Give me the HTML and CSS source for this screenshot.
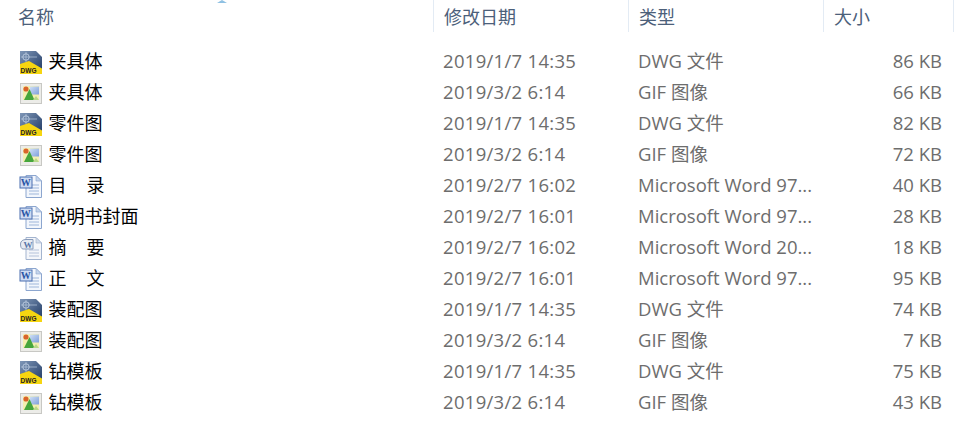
FILE: index.html

```html
<!DOCTYPE html>
<html lang="zh-CN">
<head>
  <meta charset="UTF-8" />
  <meta name="viewport" content="width=device-width, initial-scale=1" />
  <title>文件列表</title>
  <link rel="stylesheet" href="styles.css">
</head>
<body>
  <svg class="defs" width="0" height="0">
    <defs>
      <linearGradient id="dwgTop" x1="0" y1="0" x2="1" y2="1">
        <stop offset="0" stop-color="#7f97b8" />
        <stop offset="1" stop-color="#1b3560" />
      </linearGradient>
      <linearGradient id="gifSky" x1="0" y1="0" x2="1" y2="1">
        <stop offset="0" stop-color="#cfe0f5" />
        <stop offset="1" stop-color="#7f9fdc" />
      </linearGradient>
      <symbol id="dwg" viewBox="0 0 24 24">
        <path d="M1 1H17L23 7V24H1Z" fill="url(#dwgTop)" />
        <circle cx="7" cy="7" r="3.2" fill="none" stroke="#b8c8de" stroke-width="1" />
        <path d="M7 2V12M2 7H18" stroke="#b8c8de" stroke-width=".7" />
        <path d="M1 14L10 11L23 18.5V24H1Z" fill="#f6d510" />
        <text x="1.6" y="22.6" class="dwg-label">DWG</text>
      </symbol>
      <symbol id="gif" viewBox="0 0 24 24">
        <rect x="1.5" y="2.5" width="21" height="20" fill="#ecece8" stroke="#c8c8c4" />
        <rect x="4" y="5" width="16" height="14" fill="#f4efb0" />
        <rect x="11" y="5.5" width="9" height="8" fill="url(#gifSky)" />
        <path d="M5 19L10.5 8L15.5 19Z" fill="#46a63c" />
        <path d="M14 19L17 15L20 19Z" fill="#b7d88a" />
        <circle cx="7" cy="8" r="2.6" fill="#d9642a" />
      </symbol>
      <symbol id="doc" viewBox="0 0 24 24">
        <path d="M7 1.5H17L22.5 7V23.5H7Z" fill="#f2f6fc" stroke="#8ca6cf" />
        <path d="M17 1.5V7H22.5Z" fill="#c5d5ec" stroke="#8ca6cf" stroke-width=".6" />
        <path d="M10 11H20M10 14H20M10 17H20M10 20H20" stroke="#9db5da" stroke-width="1.2" />
        <rect x="1" y="3" width="12" height="11" fill="#cfdcf2" stroke="#4a6fb0" />
        <text x="1.8" y="12" class="doc-label">W</text>
      </symbol>
      <symbol id="docx" viewBox="0 0 24 24">
        <path d="M7 1.5H17L22.5 7V23.5H7Z" fill="#f4f6fa" stroke="#a3b4cf" />
        <path d="M17 1.5V7H22.5Z" fill="#d5deec" stroke="#a3b4cf" stroke-width=".6" />
        <path d="M10 14H20M10 17H20M10 20H20" stroke="#b3c2da" stroke-width="1.2" />
        <path d="M1.5 8C1.5 5 4 3.5 7 3.5H14V13H4C2.5 13 1.5 11 1.5 8Z" fill="#e6ebf3" stroke="#8a9cba" />
        <text x="4.6" y="12" class="docx-label">W</text>
      </symbol>
    </defs>
  </svg>

  <div class="list">
    <div class="head">
      <div class="head-cell name-col">名称</div>
      <div class="head-cell date-col">修改日期</div>
      <div class="head-cell type-col">类型</div>
      <div class="head-cell size-col">大小</div>
      <div class="sort-arrow"></div>
    </div>

    <div class="rows">
      <div class="row">
        <div class="cell name-col"><svg class="icon"><use href="#dwg" /></svg><span>夹具体</span></div>
        <div class="cell date-col">2019/1/7 14:35</div>
        <div class="cell type-col">DWG 文件</div>
        <div class="cell size-col">86 KB</div>
      </div>
      <div class="row">
        <div class="cell name-col"><svg class="icon"><use href="#gif" /></svg><span>夹具体</span></div>
        <div class="cell date-col">2019/3/2 6:14</div>
        <div class="cell type-col">GIF 图像</div>
        <div class="cell size-col">66 KB</div>
      </div>
      <div class="row">
        <div class="cell name-col"><svg class="icon"><use href="#dwg" /></svg><span>零件图</span></div>
        <div class="cell date-col">2019/1/7 14:35</div>
        <div class="cell type-col">DWG 文件</div>
        <div class="cell size-col">82 KB</div>
      </div>
      <div class="row">
        <div class="cell name-col"><svg class="icon"><use href="#gif" /></svg><span>零件图</span></div>
        <div class="cell date-col">2019/3/2 6:14</div>
        <div class="cell type-col">GIF 图像</div>
        <div class="cell size-col">72 KB</div>
      </div>
      <div class="row">
        <div class="cell name-col"><svg class="icon"><use href="#doc" /></svg><span>目&nbsp;&nbsp;&nbsp;&nbsp;录</span></div>
        <div class="cell date-col">2019/2/7 16:02</div>
        <div class="cell type-col">Microsoft Word 97...</div>
        <div class="cell size-col">40 KB</div>
      </div>
      <div class="row">
        <div class="cell name-col"><svg class="icon"><use href="#doc" /></svg><span>说明书封面</span></div>
        <div class="cell date-col">2019/2/7 16:01</div>
        <div class="cell type-col">Microsoft Word 97...</div>
        <div class="cell size-col">28 KB</div>
      </div>
      <div class="row">
        <div class="cell name-col"><svg class="icon"><use href="#docx" /></svg><span>摘&nbsp;&nbsp;&nbsp;&nbsp;要</span></div>
        <div class="cell date-col">2019/2/7 16:02</div>
        <div class="cell type-col">Microsoft Word 20...</div>
        <div class="cell size-col">18 KB</div>
      </div>
      <div class="row">
        <div class="cell name-col"><svg class="icon"><use href="#doc" /></svg><span>正&nbsp;&nbsp;&nbsp;&nbsp;文</span></div>
        <div class="cell date-col">2019/2/7 16:01</div>
        <div class="cell type-col">Microsoft Word 97...</div>
        <div class="cell size-col">95 KB</div>
      </div>
      <div class="row">
        <div class="cell name-col"><svg class="icon"><use href="#dwg" /></svg><span>装配图</span></div>
        <div class="cell date-col">2019/1/7 14:35</div>
        <div class="cell type-col">DWG 文件</div>
        <div class="cell size-col">74 KB</div>
      </div>
      <div class="row">
        <div class="cell name-col"><svg class="icon"><use href="#gif" /></svg><span>装配图</span></div>
        <div class="cell date-col">2019/3/2 6:14</div>
        <div class="cell type-col">GIF 图像</div>
        <div class="cell size-col">7 KB</div>
      </div>
      <div class="row">
        <div class="cell name-col"><svg class="icon"><use href="#dwg" /></svg><span>钻模板</span></div>
        <div class="cell date-col">2019/1/7 14:35</div>
        <div class="cell type-col">DWG 文件</div>
        <div class="cell size-col">75 KB</div>
      </div>
      <div class="row">
        <div class="cell name-col"><svg class="icon"><use href="#gif" /></svg><span>钻模板</span></div>
        <div class="cell date-col">2019/3/2 6:14</div>
        <div class="cell type-col">GIF 图像</div>
        <div class="cell size-col">43 KB</div>
      </div>
    </div>
  </div>
</body>
</html>
```

FILE: styles.css

```css
html, body {
  margin: 0;
  padding: 0;
  height: 100%;
  overflow: hidden;
  background-color: #fff;
}
body {
  font-family: "Open Sans", "Noto Sans CJK SC", sans-serif;
  font-size: 18.5px;
}
.defs {
  position: absolute;
}
.list {
  width: 970px;
}
.head {
  position: relative;
  display: flex;
  height: 32px;
}
.head-cell {
  height: 32px;
  line-height: 34px;
  padding-left: 10px;
  box-sizing: border-box;
  color: #4c607a;
  font-size: 18px;
  border-right: 1px solid #e3ebf4;
}
.head .name-col {
  padding-left: 18px;
}
.name-col {
  width: 434px;
}
.date-col {
  width: 195px;
}
.type-col {
  width: 195px;
}
.size-col {
  width: 130px;
}
.sort-arrow {
  position: absolute;
  left: 217px;
  top: 0;
  width: 0;
  height: 0;
  border-left: 5px solid transparent;
  border-right: 5px solid transparent;
  border-bottom: 3px solid #8fc1e3;
}
.rows {
  padding-top: 14px;
}
.row {
  display: flex;
  height: 31px;
}
.cell {
  box-sizing: border-box;
  line-height: 29px;
  padding-left: 9px;
  color: #6d6d6d;
  white-space: nowrap;
}
.cell.date-col {
  letter-spacing: .3px;
}
.cell.name-col {
  display: flex;
  align-items: center;
  padding-left: 19px;
  color: #000;
  font-size: 18px;
  word-spacing: .3px;
}
.cell.size-col {
  width: 118px;
  padding-left: 0;
  text-align: right;
}
.icon {
  width: 24px;
  height: 24px;
  margin-right: 6px;
  flex-shrink: 0;
}
.cell.name-col span {
  margin-left: -.5px;
}
.dwg-label {
  font-family: "Liberation Sans", sans-serif;
  font-size: 6.5px;
  font-weight: 700;
  fill: #222;
}
.doc-label {
  font-family: "Liberation Serif", serif;
  font-size: 10px;
  font-weight: 700;
  fill: #2a55a5;
}
.docx-label {
  font-family: "Liberation Serif", serif;
  font-size: 9px;
  font-weight: 700;
  fill: #5a76a8;
}
```
